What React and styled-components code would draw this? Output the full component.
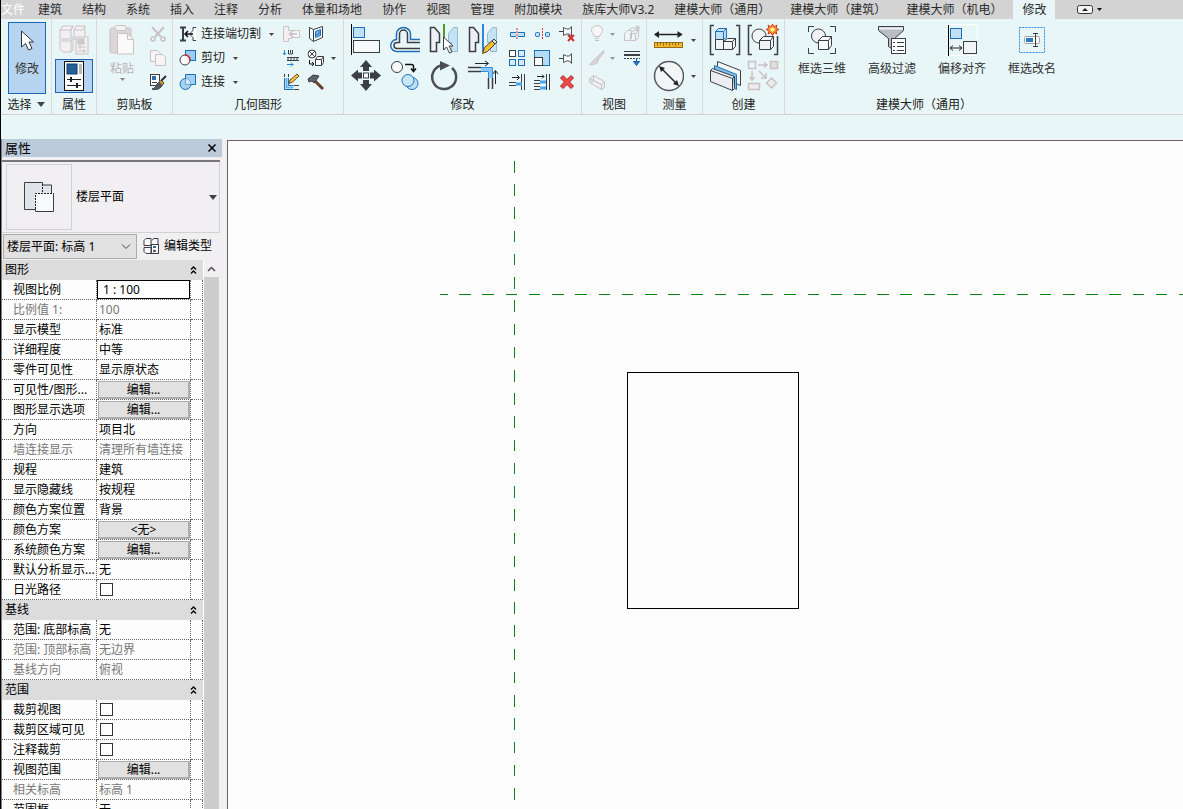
import styled, { createGlobalStyle, css } from "styled-components";

const GlobalStyle = createGlobalStyle`
  * { box-sizing: border-box; }
  body {
    margin: 0;
    overflow: hidden;
    background: #f1eff1;
    font-family: "Noto Sans", "Noto Sans CJK SC", sans-serif;
    font-size: 12px;
    line-height: 18px;
    color: #222;
  }
  button, input, select {
    font: inherit;
    color: inherit;
    margin: 0;
    padding: 0;
    border: 0;
    border-radius: 0;
    background: none;
  }
  svg { display: block; flex: none; }
`;

const Shell = styled.div`
  display: flex;
  flex-direction: column;
  height: 100vh;
  border-left: 1px solid #000;
  overflow: hidden;
`;

/* ---------- ribbon ---------- */

const TabBar = styled.nav`
  display: flex;
  flex: none;
  height: 19px;
  background: #d3d3d3;
  white-space: nowrap;
`;

const Tab = styled.button`
  padding: 0 10px;
  line-height: 18px;
  color: #2b2b2b;
  ${(p) => p.$file && css`
    padding: 0 3px 0 0;
    color: #fff;
  `}
  ${(p) => p.$active && css`
    padding: 0 9px;
    margin-left: 1px;
    background: #e8f6f8;
  `}
`;

const CollapseButton = styled.button`
  display: flex;
  align-items: center;
  gap: 4px;
  margin-left: 22px;
`;

const Ribbon = styled.div`
  display: flex;
  flex: none;
  height: 96px;
  background: #e8f6f8;
  border-bottom: 1px solid #d5cfcd;
`;

const Panel = styled.section`
  display: flex;
  flex-direction: column;
  flex: none;
  width: ${(p) => p.$w}px;
  border-right: ${(p) => (p.$last ? "0" : "1px solid #dcd8d8")};
`;

const PanelBody = styled.div`
  display: flex;
  gap: ${(p) => p.$gap || 0}px;
  height: 76px;
  padding: 3px 0 0 ${(p) => p.$pad || 0}px;
`;

const PanelTitle = styled.div`
  display: flex;
  justify-content: center;
  align-items: center;
  gap: 5px;
  height: 19px;
  line-height: 19px;
  white-space: nowrap;
`;

const BigGrid = styled.div`
  display: grid;
  grid-template-columns: repeat(${(p) => p.$cols}, ${(p) => p.$col || 39}px);
  grid-template-rows: 36px 36px;
  align-items: center;
`;

const SmallGrid = styled.div`
  display: grid;
  grid-template-columns: repeat(${(p) => p.$cols}, ${(p) => p.$col || 25}px);
  grid-template-rows: repeat(3, 24px);
  align-items: center;
`;

const Tool = styled.button`
  display: flex;
  align-items: center;
  gap: ${(p) => p.$gap || 0}px;
  white-space: nowrap;
`;

const ToolLabel = styled.span`
  margin-right: 4px;
`;

const TallTool = styled.button`
  display: flex;
  flex-direction: column;
  flex: none;
  align-items: center;
  width: ${(p) => p.$w}px;
  height: 72px;
  padding-top: 2px;
  white-space: nowrap;
  color: ${(p) => (p.disabled ? "#b9b3b5" : "#333")};
  ${(p) => p.$on && css`
    padding-top: 1px;
    background: #b6d3ef;
    border: 1px solid #1a66b8;
  `}
`;

const TallLabel = styled.span`
  margin-top: 4px;
`;

const PropToggle = styled.button`
  display: flex;
  align-items: center;
  justify-content: center;
  width: 38px;
  height: 34px;
  margin-top: 3px;
  background: #b6d3ef;
  border: 1px solid #1a66b8;
`;

const PropIcons = styled.div`
  display: flex;
  flex-direction: column;
  align-items: center;
  padding-top: 2px;
`;

const OptionsBar = styled.div`
  flex: none;
  height: 24px;
  background: #e8f6f8;
`;

/* ---------- properties palette ---------- */

const Workspace = styled.main`
  display: flex;
  flex: 1;
  min-height: 0;
`;

const Palette = styled.aside`
  display: flex;
  flex-direction: column;
  flex: none;
  width: 221px;
  margin-right: 5px;
  min-height: 0;
  background: #f1eff1;
  border-left: 1px solid #808080;
  color: #000;
`;

const PaletteHead = styled.header`
  display: flex;
  flex: none;
  align-items: center;
  justify-content: space-between;
  height: 18px;
  padding: 0 6px 0 3px;
  background: #bccbda;
  font-size: 13px;
`;

const PaletteBody = styled.div`
  display: flex;
  flex-direction: column;
  flex: 1;
  min-height: 0;
  margin: 3px 2px 0 0;
  border-top: 2px solid #77787a;
`;

const TypeSelector = styled.button`
  display: flex;
  flex: none;
  align-items: center;
  gap: 4px;
  height: 71px;
  padding: 0 2px 0 4px;
  border: 1px solid #cfd3d2;
  border-top: 0;
  border-left: 0;
  text-align: left;
`;

const Preview = styled.span`
  display: flex;
  align-items: center;
  justify-content: center;
  width: 66px;
  height: 66px;
  border: 1px solid #cfd3d2;
`;

const TypeName = styled.span`
  flex: 1;
`;

const FilterRow = styled.div`
  display: flex;
  flex: none;
  align-items: center;
  gap: 6px;
  height: 27px;
`;

const SelectBox = styled.label`
  display: grid;
  grid-template-columns: 1fr 20px;
  align-items: center;
  width: 134px;
  height: 25px;
  margin-left: 1px;
  background: #e1e1e1;
  border: 1px solid #adadad;
`;

const FilterSelect = styled.select`
  grid-row: 1;
  grid-column: 1 / 3;
  height: 23px;
  padding-left: 3px;
  appearance: none;
`;

const Chevron = styled.svg`
  grid-row: 1;
  grid-column: 2;
  justify-self: center;
  pointer-events: none;
`;

const EditType = styled.button`
  display: flex;
  align-items: center;
  gap: 5px;
  padding-bottom: 2px;
`;

const ListArea = styled.div`
  display: flex;
  flex: 1;
  min-height: 0;
  overflow: hidden;
`;

const PropTable = styled.table`
  align-self: flex-start;
  width: 201px;
  table-layout: fixed;
  border-collapse: separate;
  border-spacing: 0;
  background: #fdfdfd;
  white-space: nowrap;
`;

const GroupCell = styled.th`
  height: 20px;
  padding: 0 5px 0 3px;
  background: #dcdcdd;
  font-weight: normal;
  text-align: left;
`;

const GroupInner = styled.div`
  display: flex;
  align-items: center;
  justify-content: space-between;
  height: 20px;
`;

const cell = css`
  height: 20px;
  padding: 0;
  line-height: 18px;
  font-weight: normal;
  text-align: left;
  border-right: 1px dotted #666;
  border-bottom: 1px dotted #666;
  color: ${(p) => (p.$dim ? "#777" : "#000")};
`;

const NameCell = styled.th`
  ${cell}
  padding-left: 11px;
`;

const ValueCell = styled.td`
  ${cell}
  padding-left: ${(p) => (p.$flush ? 0 : 2)}px;
`;

const EndCell = styled.td`
  ${cell}
`;

const ScaleInput = styled.input`
  display: block;
  width: 93px;
  height: 19px;
  padding-left: 5px;
  border: 1px solid #000;
  background: #fff;
`;

const EditButton = styled.button`
  display: block;
  width: 92px;
  height: 18px;
  margin-left: 1px;
  line-height: 16px;
  background: #e1e1e1;
  border: 1px solid #adadad;
  border-right-width: 2px;
  border-bottom-width: 2px;
`;

const Check = styled.input`
  display: block;
  appearance: none;
  width: 13px;
  height: 13px;
  margin-left: 1px;
  border: 1px solid #333;
  background: #fff;
`;

const ScrollBar = styled.div`
  display: flex;
  flex-direction: column;
  width: 16px;
  background: #f1eff1;
  border-left: 1px solid #fff;
`;

const ScrollUp = styled.button`
  display: flex;
  flex: none;
  align-items: center;
  justify-content: center;
  height: 17px;
`;

const ScrollThumb = styled.div`
  flex: 1;
  background: #cdcdcd;
`;

const Canvas = styled.div`
  flex: 1;
  min-width: 0;
  margin-top: 1px;
  border-top: 1px solid #6b6468;
  border-left: 1px solid #6b6468;
  background: #fdfdfd;
`;

/* ---------- icons ---------- */

const INK = "#3b3f45";
const BLUE = "#1c6fbd";
const SKY = "#bfe0f5";
const PALE = "#c9c2c4";

const Svg = ({ w = 32, h = w, children, ...rest }) => (
  <svg width={w} height={h} viewBox={`0 0 ${w} ${h}`} fill="none" stroke={INK} aria-hidden="true" {...rest}>
    {children}
  </svg>
);

const Caret = ({ big, color = "#444" }) =>
  big ? (
    <svg width="8" height="5" viewBox="0 0 8 5" fill={color}><path d="M0 0h8L4 5z" /></svg>
  ) : (
    <svg width="5" height="3" viewBox="0 0 5 3" fill={color}><path d="M0 0h5L2.500 3z" /></svg>
  );

const CursorIcon = () => (
  <Svg w={28} h={32}>
    <path d="M8.500 7v16l4-3.500 3 6.500 3.500-1.500-3-6.500h4.500z" fill="#fff" stroke="#30343a" />
  </Svg>
);

const TypePropsIcon = () => (
  <Svg stroke={PALE}>
    <g fill="#f3f0f1">
      <path d="M2 6l3-4h10l-2 4v9H2zM16 6l2-4h9v10l-3 3h-8zM2 17h11l2-2v11l-2 2H5l-3-3z" />
      <path d="M2 6h11l2-4M13 15l2-2M16 6h9l2-4M13 17v11" fill="none" />
      <rect x="18" y="13" width="12" height="17" />
      <rect x="20" y="15" width="6" height="5" fill="#cfc9cb" />
      <path d="M20 23h8M20 27h8M22 21v4M26 25v4" />
    </g>
  </Svg>
);

const PropsIcon = () => (
  <Svg w={20} h={30}>
    <rect x=".5" y=".5" width="19" height="29" fill="#fff" stroke="#111" />
    <rect x="3" y="3" width="10" height="10" fill="#245f97" stroke="#153f66" />
    <rect x="15" y="3" width="3" height="10" fill="#b9b9b9" stroke="none" />
    <path d="M3 18.500h14M3 24.500h14" stroke="#222" />
    <path d="M7 16v5M13 22v5" stroke="#222" strokeWidth="2" />
  </Svg>
);

const PasteIcon = () => (
  <Svg stroke={PALE}>
    <rect x="4" y="4" width="21" height="25" rx="2" fill="#dbd7d9" />
    <rect x="9" y="1.500" width="11" height="5" rx="2" fill="#f4f2f3" />
    <path d="M11.500 9.500h10l6 6V30h-16z" fill="#fbfafb" />
    <path d="M21.500 9.500v6h6" />
  </Svg>
);

const CutIcon = () => (
  <Svg w={18} stroke={PALE} strokeWidth="2">
    <path d="M3 2l9 10M15 2L6 12" />
    <circle cx="4" cy="14" r="2" strokeWidth="1.500" /><circle cx="14" cy="14" r="2" strokeWidth="1.500" />
  </Svg>
);

const CopyPageIcon = () => (
  <Svg w={18} stroke={PALE}>
    <path d="M1.500 1.500h7l3 3v8h-10z" fill="#f6f4f5" />
    <path d="M6.500 5.500h7l3 3v8h-10z" fill="#f6f4f5" />
  </Svg>
);

const MatchIcon = () => (
  <Svg w={18}>
    <rect x="1.500" y="1.500" width="9" height="11" fill="#fff" />
    <rect x="3" y="3" width="4" height="4" fill="#2a6cae" stroke="none" />
    <path d="M3 9.500h5" />
    <path d="M17 3l-6 6" stroke="#2d3034" strokeWidth="2" />
    <path d="M12 7l3 3-3 4c-3 3-6 3-9 2 3-1 4-2 5-5z" fill="#555b61" />
    <path d="M11 8l3 3" stroke="#d79a3a" strokeWidth="2" />
  </Svg>
);

const CopeIcon = () => (
  <Svg w={18}>
    <path d="M1 2.500h6M1 15.500h6M4 3v12" strokeWidth="2" />
    <path d="M17 2.500h-3v3l-2 2v3l2 2v3h3" fill="#fff" />
    <path d="M6 9h8M9 6L6 9l3 3" stroke="#111" strokeWidth="1.500" />
  </Svg>
);

const GeoCutIcon = () => (
  <Svg w={18}>
    <rect x="6.500" y="1.500" width="10" height="10" fill="#9ecbee" stroke={BLUE} />
    <circle cx="6" cy="11" r="5" fill="#fff" />
    <path d="M6 6a5 5 0 0 1 5 5" stroke="#e02020" strokeWidth="1.500" />
  </Svg>
);

const JoinIcon = () => (
  <Svg w={18} stroke={BLUE}>
    <path d="M6.500 1.500h10v10H12a5.500 5.500 0 1 1-5.500-6z" fill="#a5d1f0" />
    <path d="M6.500 5.500a5 5 0 0 1 5 6h-5z" fill="#d3e9f8" strokeOpacity=".5" />
  </Svg>
);

const WallJoinIcon = () => (
  <Svg w={18} stroke={PALE}>
    <path d="M1.500 1.500h5v4h3v8h-3v3h-5z" fill="#f3f0f1" />
    <path d="M9.500 5.500h8v7h-8" fill="#f8f6f7" />
    <path d="M15 9H8M11 6L7.500 9l3.500 3" strokeWidth="1.500" />
  </Svg>
);

const SplitFaceIcon = () => (
  <Svg w={18}>
    <path d="M2.500 2.500l4 2 9-3v11l-9 4-4-3zM6.500 4.500v12" fill="#f8fbfd" />
    <path d="M8.500 6.500l5-2v6l-5 2z" fill="#7fb9e8" stroke={BLUE} />
    <path d="M12 6v3l-3 1" stroke={BLUE} />
  </Svg>
);

const BeamIcon = () => (
  <Svg w={18}>
    <path d="M2.500 1v4M1 4l1.500 2L4 4" stroke="#1f85e0" />
    <path d="M6.500 1v4h4V1M8.500 1v3" />
    <path d="M5 8.500h12M5 11.500h12" />
    <path d="M5 10h12" strokeDasharray="2 1" />
    <path d="M5 15.500h6M9 13.500l2 2-2 2" stroke="#1f85e0" />
  </Svg>
);

const PaintIcon = () => (
  <Svg w={18}>
    <circle cx="5" cy="5" r="4" fill="#fff" /><path d="M2 2l6 6M8 2L2 8" />
    <path d="M2.500 11v4h4M5 13l2 2-2 2" stroke="#111" />
    <path d="M8.500 10.500l2-3h6v6l-2 3h-6zM8.500 10.500h6v6M14.500 10.500l2-3" fill="#fff" />
  </Svg>
);

const CornerEditIcon = () => (
  <Svg w={18}>
    <path d="M2.500 5v11.500h9M6.500 5v7.500h5" stroke={BLUE} />
    <path d="M4.500 5v9.500h7" stroke="#66b2ea" strokeWidth="2" />
    <path d="M2.500 1v3M6.500 1v3M12 12.500h5M12 16.500h5" />
    <path d="M7 10.500l1-3.500 7-6 2 2-6.500 6z" fill="#f5c242" stroke="#6d4a20" />
  </Svg>
);

const HammerIcon = () => (
  <Svg w={18}>
    <path d="M7 7l9 9" stroke="#6b3d33" strokeWidth="3" />
    <path d="M1 6l5-4 6 1-2 3-3 4-2-2-3 1z" fill="#5c6269" />
  </Svg>
);

const AlignIcon = () => (
  <Svg>
    <path d="M1.500 0v31" stroke="#000" />
    <rect x="3.500" y="3.500" width="11" height="10" fill={SKY} stroke={BLUE} />
    <rect x="3.500" y="16.500" width="26" height="12" fill="#f7fafb" />
  </Svg>
);

const OffsetIcon = () => (
  <Svg>
    <path d="M31 15.500H21.500V10a7 6.500 0 0 0-14 0v5.500A6 6 0 0 0 8 27.500h23" fill="#f3f9fb" stroke={BLUE} strokeWidth="1.500" />
    <path d="M31 18.500H18.500V10a4 4 0 0 0-8 0v8.500H8a3 3 0 0 0 0 6h23" fill="#e8f6f8" strokeWidth="1.500" />
  </Svg>
);

const MirrorHalves = () => (
  <>
    <path d="M2.500 3.500h4l5 6v9h-3v9h-6z" fill="#eef1f3" strokeWidth="1.500" />
    <path d="M29.500 3.500h-4l-5 6v9h3v9h6z" fill="#c5e3f3" stroke="#8dbbd6" />
  </>
);

const MirrorPickIcon = () => (
  <Svg>
    <MirrorHalves />
    <path d="M16 0v26" stroke="#4d9a2e" strokeWidth="2" />
    <path d="M15.500 13v13l3-3 3 6 2.500-1-3-6h4z" fill="#fff" />
  </Svg>
);

const MirrorDrawIcon = () => (
  <Svg>
    <MirrorHalves />
    <path d="M16 0v28" stroke="#3186d6" strokeWidth="2" />
    <path d="M15.500 29.500l2-6 9-8 3 3-9 9z" fill="#f5bd35" stroke="#554128" />
    <path d="M25 17l2-2 3 3-2 2z" fill="#ddd" />
  </Svg>
);

const MoveIcon = () => (
  <Svg stroke="none" fill={INK}>
    <path d="M16 0l6 7h-3v4h-6V7h-3zM16 31l6-7h-3v-4h-6v4h-3zM1 15.500l7-6v3h4v6H8v3zM31 15.500l-7-6v3h-4v6h4v3z" />
    <rect x="13.500" y="13" width="5" height="5" fill="#fff" stroke={INK} />
  </Svg>
);

const CopyIcon = () => (
  <Svg>
    <circle cx="8" cy="7" r="5.500" fill="#f9fbfb" />
    <path d="M16 4.500h6.500a2 2 0 0 1 2 2V11M22 8.500l2.500 3 2.500-3" stroke="#111" strokeWidth="1.500" />
    <circle cx="23" cy="23.500" r="6" fill={SKY} stroke={BLUE} />
    <circle cx="19" cy="20.500" r="6" fill="#c9e6f6" stroke={BLUE} />
  </Svg>
);

const RotateIcon = () => (
  <Svg>
    <path d="M24 8a12 12 0 1 1-11-2.500" stroke="#4b4f54" strokeWidth="2.500" />
    <path d="M12 1l10 4.500-10 5z" fill="#4b4f54" stroke="none" />
  </Svg>
);

const TrimIcon = () => (
  <Svg>
    <path d="M8 3.500h13M18 1l3.500 2.500L18 6M28.500 24V11M26 14l2.500-3.500L31 14" stroke="#222" />
    <path d="M1 7.500h13M1 11.500h13M21.500 18v11M25.500 18v11" strokeWidth="1.500" />
    <path d="M14 9.500h9.500V18" stroke="#8cc6f4" strokeWidth="3" />
    <path d="M14 7.500h11.500V18M14 11.500h7.500V18" stroke="#2f8fe6" />
  </Svg>
);

const SplitIcon = () => (
  <Svg w={18}>
    <path d="M8 7.500H2.500v4H8M10 7.500h6.500v4H10" fill={SKY} stroke={BLUE} />
    <path d="M9 3v12" stroke="#e02828" strokeDasharray="2 1" />
  </Svg>
);

const SplitGapIcon = () => (
  <Svg w={18}>
    <rect x="2.500" y="7.500" width="4" height="4" rx="1" fill={SKY} stroke={BLUE} />
    <rect x="12.500" y="7.500" width="4" height="4" rx="1" fill={SKY} stroke={BLUE} />
    <path d="M9.500 3v12" stroke="#e02828" strokeDasharray="2 1" />
  </Svg>
);

const PinShape = () => (
  <>
    <path d="M1 9.500h4" />
    <path d="M5.500 5.500l3 1.500h3l2-2.500v10L11.500 12h-3l-3 1.500z" fill="#f6fafa" stroke="#555" />
  </>
);

const UnpinIcon = () => (
  <Svg w={18}>
    <g transform="translate(0 -3)"><PinShape /></g>
    <path d="M10 10l6 6M16 10l-6 6" stroke="#d22c2c" strokeWidth="2" />
  </Svg>
);

const PinIcon = () => <Svg w={18}><PinShape /></Svg>;

const ArrayIcon = () => (
  <Svg w={18} fill="#d7ebf7" stroke={BLUE}>
    <rect x="1.500" y="1.500" width="6" height="6" fill="#fff" stroke={INK} />
    <rect x="10.500" y="1.500" width="6" height="6" />
    <rect x="1.500" y="10.500" width="6" height="6" />
    <rect x="10.500" y="10.500" width="6" height="6" />
  </Svg>
);

const ScaleIcon = () => (
  <Svg w={18}>
    <rect x="1.500" y="1.500" width="15" height="15" fill="#b4dcf2" stroke={BLUE} />
    <rect x="1.500" y="8.500" width="8" height="8" fill="#fff" />
  </Svg>
);

const TrimOneIcon = () => (
  <Svg w={18}>
    <path d="M4 4.500h7M9 2l2.500 2.500L9 7" stroke="#222" />
    <path d="M1 9.500h7M1 12.500h7M13.500 1v16M16.500 1v16" />
    <path d="M8 11h6" stroke="#4aa3ee" strokeWidth="3" />
  </Svg>
);

const TrimManyIcon = () => (
  <Svg w={18}>
    <path d="M4 3.500h7M9 1.500l2 2-2 2" stroke="#222" />
    <path d="M1 7.500h6M1 10.500h6M1 13.500h6M1 16.500h6M13.500 1v16M16.500 1v16" />
    <path d="M7 9h6M7 15h6" stroke="#4aa3ee" strokeWidth="3" />
  </Svg>
);

const DeleteIcon = () => (
  <Svg w={18}>
    <path d="M2.500 5l2.500-2.500L9 6.500l4-4L15.500 5l-4 4 4 4-2.500 2.500-4-4-4 4L2.500 13l4-4z" fill="#f24a4a" stroke="#a61f1f" />
  </Svg>
);

const BulbIcon = () => (
  <Svg w={18} stroke={PALE}>
    <path d="M6.500 11.500c0-2-3-3-3-6a5.500 5 0 0 1 11 0c0 3-3 4-3 6z" fill="#f8f5f6" />
    <path d="M7 13.500h4M7 15.500h4" />
  </Svg>
);

const DisplaceIcon = () => (
  <Svg w={18} stroke={PALE}>
    <path d="M1.500 8.500l3-3h4v8l-2 2h-5zM7.500 8.500l3-3h5v7l-3 3h-5zM7.500 8.500h5v7M12.500 8.500l3-3M6 5l2-2h4" />
    <path d="M14.500 0v6M12 3h5M12.500 1l4 4M16.500 1l-4 4" />
  </Svg>
);

const BrushIcon = () => (
  <Svg w={18} stroke={PALE} fill="#d9d3d5">
    <path d="M15.500 1.500l1 1-6 8-2-2z" />
    <path d="M7.500 9.500l3 2c-1 3-5 5-9 4 3-1 3-4 6-6z" />
  </Svg>
);

const LineworkIcon = () => (
  <Svg w={18}>
    <path d="M1 2.500h16" /><path d="M1 6h16" strokeWidth="2" />
    <path d="M1 9.500h16" strokeDasharray="2 1" />
    <path d="M13.500 9v4M10.500 12.500h6l-3 4z" fill="#1f7ad8" stroke="#175ca8" />
  </Svg>
);

const BoxIcon = () => (
  <Svg w={18} stroke={PALE} fill="#f1eeef">
    <path d="M1.500 5.500l4-3 11 6v6l-3 2-12-7zM1.500 5.500l12 6v5M13.500 11.500l3-3M4 7v3M5.500 2.500v5l8 4" />
  </Svg>
);

const RulerIcon = () => (
  <Svg>
    <path d="M3 10.500h27" stroke="#222" strokeWidth="1.500" />
    <path d="M2 10.500l5-3.500v7zM30.500 10.500l-5-3.500v7z" fill="#222" stroke="none" />
    <rect x="2.500" y="18.500" width="28" height="5" fill="#f2b927" stroke="#9a6a1c" />
    <path d="M5.500 19v3M8.500 19v2M11.500 19v3M14.500 19v2M17.500 19v3M20.500 19v2M23.500 19v3M26.500 19v2" stroke="#9a6a1c" />
  </Svg>
);

const DimensionIcon = () => (
  <Svg>
    <circle cx="17" cy="16" r="14.500" fill="#f3f5f6" stroke="#55595e" strokeWidth="1.500" />
    <path d="M9 8l16 16" stroke="#222" strokeWidth="1.500" />
    <path d="M7 6l6 2-4 4zM27 26l-6-2 4-4z" fill="#222" stroke="none" />
  </Svg>
);

const GroupIcon = () => (
  <Svg>
    <path d="M5 1.500H1.500v29H5M27 1.500h3.500v29H27" strokeWidth="1.500" />
    <path d="M6.500 7.500l3-3h8v9l-3 2h-8z" fill={SKY} stroke={BLUE} />
    <path d="M6.500 7.500h8v8M14.500 7.500l3-3" stroke={BLUE} />
    <path d="M6.500 15.500h8v10h-8zM14.500 17.500l4-3h8v8l-3 3h-9z" fill="#f3f4f6" />
    <path d="M14.500 17.500h9v8M23.500 17.500l3-3" />
  </Svg>
);

const NewGroupIcon = () => (
  <Svg>
    <path d="M5 1.500H1.500v29H5M27 30.500h3.500V12" strokeWidth="1.500" />
    <circle cx="12" cy="12" r="7" fill="#f3f4f6" />
    <path d="M12.500 16.500l4-4h10v10l-3 3h-11z" fill="#f3f4f6" />
    <path d="M12.500 16.500h11v9M23.500 16.500l3-4" />
    <path d="M25.500 0l1.500 3 3-2-1 3 3 1.500-3 1.500 1 3-3-1.500-1.500 3-1.500-3-3 1.500 1-3-3-1.500 3-1.500-1-3 3 2z" fill="#ff9c28" stroke="#d3391c" />
    <circle cx="25.500" cy="5.500" r="2" fill="#fff3a0" stroke="none" />
  </Svg>
);

const WallLayersIcon = () => (
  <Svg>
    <path d="M8.500 1.500l23 9v15l-23-10z" fill="#f6f7f8" />
    <path d="M5.500 5.500l22 9v15l-22-10z" fill="#7dbff0" stroke={BLUE} />
    <path d="M1.500 10.500l22 8v12l-22-9zM1.500 10.500l2-2 22 8-2 2M25.500 16.500v12l-2 2" fill="#eceef1" />
  </Svg>
);

const PartsIcon = () => (
  <Svg stroke={PALE} strokeWidth="1.500">
    <rect x="1.500" y="1.500" width="7" height="7" /><rect x="23.500" y="1.500" width="7" height="7" fill="#e3dfe1" />
    <path d="M11 5h9M17 2.500l3 2.500-3 2.500M5 11v9M2.500 17L5 20l2.500-3M12 11l7 7M19 13v5h-5" />
    <rect x="1.500" y="23.500" width="11" height="6" fill="#eeebec" />
    <path d="M24.500 18l5 5-5 5-5-5z" fill="#eeebec" />
  </Svg>
);

const Box3dIcon = () => (
  <Svg>
    <path d="M2.500 8V2.500H8M24 2.500h5.500V8M2.500 24v5.500H8M24 29.500h5.500V24" />
    <circle cx="12.500" cy="12" r="7" fill="#eef0f2" />
    <path d="M12.500 16.500l4-4h9v9l-3 4h-10z" fill="#f8f9fa" />
    <path d="M12.500 16.500h10v9M22.500 16.500l3-4" />
  </Svg>
);

const FilterIcon = () => (
  <Svg>
    <path d="M2.500 2.500h25v4l-9 8v12l-6-4v-8l-10-8z" fill="#b9bec4" />
    <path d="M3 3.500h24v2H3z" fill="#eef0f2" stroke="none" />
    <rect x="15.500" y="14.500" width="14" height="15" fill="#fff" />
    <path d="M17 18.500h2M21 18.500h7M17 22.500h2M21 22.500h7M17 26.500h2M21 26.500h7" />
  </Svg>
);

const OffsetAlignIcon = () => (
  <Svg>
    <path d="M0 .5h31v31H0" stroke="#fff" />
    <path d="M2.500 1v31" stroke="#000" />
    <rect x="4.500" y="4.500" width="11" height="10" fill={SKY} stroke={BLUE} />
    <rect x="17.500" y="17.500" width="13" height="12" fill="#f2f3f5" />
    <path d="M4 24h12M7 21.500L4 24l3 2.500M13 21.500l3 2.500-3 2.500" stroke="#222" />
  </Svg>
);

const RenameIcon = () => (
  <Svg>
    <rect x="3.500" y="3.500" width="25" height="25" stroke="#2b8ae0" strokeDasharray="2 1" />
    <rect x="8.500" y="12.500" width="15" height="7" rx="1" fill="#fff" stroke="#9aa4ad" />
    <rect x="10" y="14" width="7" height="4" fill="#2f79c4" stroke="none" />
    <path d="M17 9.500h5M17 22.500h5M19.500 10v12" />
  </Svg>
);

const FloorPlanIcon = () => (
  <Svg w={32} h={34}>
    <path d="M1.500 2.500h17v2h10v9h-16v16h-11z" fill="#dfe4e8" stroke="none" />
    <path d="M12.500 13.500h18v18h-18z" fill="#f8fbfc" stroke="none" />
    <path d="M12.500 29.500h-11v-27h18v2.500h9v8" />
    <path d="M19.500 4v9.500M12.500 29V13.500h17" stroke="#222" strokeDasharray="2 1" />
    <path d="M30.500 13v18.500h-18v-2" />
  </Svg>
);

const EditTypeIcon = () => (
  <Svg w={16}>
    <path d="M1 2.500l2-2h5v7H1zM9 2.500l1.500-2H15V7H9M1 9.500h7v6H3l-2-2z" fill="#f7f8f9" />
    <rect x="8.500" y="6.500" width="7" height="9" fill="#fff" />
    <rect x="10" y="8" width="3" height="2" fill="#2a6cae" stroke="none" />
    <path d="M10 12l3 1-3 1" />
  </Svg>
);

const CollapseIcon = () => (
  <svg width="16" height="9" viewBox="0 0 16 9" fill="none" stroke="#333" aria-hidden="true">
    <rect x=".5" y=".5" width="15" height="8" rx="2" fill="#f4f4f4" />
    <path d="M5 6h6L8 3z" fill="#222" stroke="none" />
  </svg>
);

const CloseIcon = () => (
  <svg width="8" height="8" viewBox="0 0 8 8" stroke="#000" strokeWidth="1.500" aria-hidden="true">
    <path d="M.5.500l7 7M7.500.500l-7 7" />
  </svg>
);

const DoubleUp = () => (
  <svg width="9" height="9" viewBox="0 0 9 9" fill="none" stroke="#000" strokeWidth="1.300" aria-hidden="true">
    <path d="M2 3.500L4.500 1 7 3.500M2 7.500L4.500 5 7 7.500" />
  </svg>
);

/* ---------- data ---------- */

const TABS = [
  "建筑", "结构", "系统", "插入", "注释", "分析", "体量和场地", "协作", "视图", "管理",
  "附加模块", "族库大师V3.2", "建模大师（通用）", "建模大师（建筑）", "建模大师（机电）",
];

const MODIFY_BIG = [
  ["对齐", AlignIcon], ["偏移", OffsetIcon], ["镜像 - 拾取轴", MirrorPickIcon], ["镜像 - 绘制轴", MirrorDrawIcon],
  ["移动", MoveIcon], ["复制", CopyIcon], ["旋转", RotateIcon], ["修剪/延伸为角", TrimIcon],
];

const MODIFY_SMALL = [
  ["拆分图元", SplitIcon], ["用间隙拆分", SplitGapIcon], ["解锁", UnpinIcon],
  ["阵列", ArrayIcon], ["缩放", ScaleIcon], ["锁定", PinIcon],
  ["修剪/延伸单个图元", TrimOneIcon], ["修剪/延伸多个图元", TrimManyIcon], ["删除", DeleteIcon],
];

const MASTER_TOOLS = [
  ["框选三维", Box3dIcon], ["高级过滤", FilterIcon], ["偏移对齐", OffsetAlignIcon], ["框选改名", RenameIcon],
];

const GROUPS = [
  {
    title: "图形",
    rows: [
      { name: "视图比例", kind: "input", value: "1 : 100" },
      { name: "比例值 1:", value: "100", dim: true },
      { name: "显示模型", value: "标准" },
      { name: "详细程度", value: "中等" },
      { name: "零件可见性", value: "显示原状态" },
      { name: "可见性/图形...", kind: "button", value: "编辑..." },
      { name: "图形显示选项", kind: "button", value: "编辑..." },
      { name: "方向", value: "项目北" },
      { name: "墙连接显示", value: "清理所有墙连接", dim: true },
      { name: "规程", value: "建筑" },
      { name: "显示隐藏线", value: "按规程" },
      { name: "颜色方案位置", value: "背景" },
      { name: "颜色方案", kind: "button", value: "<无>" },
      { name: "系统颜色方案", kind: "button", value: "编辑..." },
      { name: "默认分析显示...", value: "无" },
      { name: "日光路径", kind: "check" },
    ],
  },
  {
    title: "基线",
    rows: [
      { name: "范围: 底部标高", value: "无" },
      { name: "范围: 顶部标高", value: "无边界", dim: true },
      { name: "基线方向", value: "俯视", dim: true },
    ],
  },
  {
    title: "范围",
    rows: [
      { name: "裁剪视图", kind: "check" },
      { name: "裁剪区域可见", kind: "check" },
      { name: "注释裁剪", kind: "check" },
      { name: "视图范围", kind: "button", value: "编辑..." },
      { name: "相关标高", value: "标高 1", dim: true },
      { name: "范围框", value: "无" },
    ],
  },
];

/* ---------- parts ---------- */

function IconTool({ name, icon: Icon }) {
  return <Tool aria-label={name}><Icon /></Tool>;
}

function PropValue({ row }) {
  if (row.kind === "input") return <ScaleInput aria-label={row.name} defaultValue={row.value} />;
  if (row.kind === "button") return <EditButton>{row.value}</EditButton>;
  if (row.kind === "check") return <Check type="checkbox" aria-label={row.name} />;
  return row.value;
}

function PropGroup({ group }) {
  return (
    <tbody>
      <tr>
        <GroupCell colSpan={3}>
          <GroupInner>{group.title}<DoubleUp /></GroupInner>
        </GroupCell>
      </tr>
      {group.rows.map((row) => (
        <tr key={row.name}>
          <NameCell scope="row" $dim={row.dim}>{row.name}</NameCell>
          <ValueCell $dim={row.dim} $flush={row.kind === "input" || row.kind === "button"}>
            <PropValue row={row} />
          </ValueCell>
          <EndCell />
        </tr>
      ))}
    </tbody>
  );
}

function RibbonPanels() {
  return (
    <Ribbon>
      <Panel $w={51}>
        <PanelBody $pad={7}>
          <TallTool $w={38} $on><CursorIcon /><TallLabel>修改</TallLabel></TallTool>
        </PanelBody>
        <PanelTitle>选择<Caret big /></PanelTitle>
      </Panel>
      <Panel $w={45}>
        <PanelBody $pad={3}>
          <PropIcons>
            <Tool aria-label="类型属性" disabled><TypePropsIcon /></Tool>
            <PropToggle aria-label="属性"><PropsIcon /></PropToggle>
          </PropIcons>
        </PanelBody>
        <PanelTitle>属性</PanelTitle>
      </Panel>
      <Panel $w={76}>
        <PanelBody $pad={5} $gap={7}>
          <TallTool $w={40} disabled><PasteIcon /><TallLabel>粘贴</TallLabel><Caret color="#8d7f7f" /></TallTool>
          <SmallGrid $cols={1}>
            <IconTool name="剪切" icon={CutIcon} />
            <IconTool name="复制到剪贴板" icon={CopyPageIcon} />
            <IconTool name="匹配类型属性" icon={MatchIcon} />
          </SmallGrid>
        </PanelBody>
        <PanelTitle>剪贴板</PanelTitle>
      </Panel>
      <Panel $w={171}>
        <PanelBody $pad={6}>
          <SmallGrid $cols={1} $col={103}>
            <Tool $gap={4}><CopeIcon /><ToolLabel>连接端切割</ToolLabel><Caret /></Tool>
            <Tool $gap={4}><GeoCutIcon /><ToolLabel>剪切</ToolLabel><Caret /></Tool>
            <Tool $gap={4}><JoinIcon /><ToolLabel>连接</ToolLabel><Caret /></Tool>
          </SmallGrid>
          <SmallGrid $cols={2}>
            <IconTool name="墙连接" icon={WallJoinIcon} />
            <IconTool name="拆分面" icon={SplitFaceIcon} />
            <IconTool name="梁/柱连接" icon={BeamIcon} />
            <Tool aria-label="填色" $gap={6}><PaintIcon /><Caret /></Tool>
            <IconTool name="编辑连接" icon={CornerEditIcon} />
            <IconTool name="拆除" icon={HammerIcon} />
          </SmallGrid>
        </PanelBody>
        <PanelTitle>几何图形</PanelTitle>
      </Panel>
      <Panel $w={238}>
        <PanelBody $pad={6} $gap={2}>
          <BigGrid $cols={4}>
            {MODIFY_BIG.map(([name, icon]) => <IconTool key={name} name={name} icon={icon} />)}
          </BigGrid>
          <SmallGrid $cols={3}>
            {MODIFY_SMALL.map(([name, icon]) => <IconTool key={name} name={name} icon={icon} />)}
          </SmallGrid>
        </PanelBody>
        <PanelTitle>修改</PanelTitle>
      </Panel>
      <Panel $w={65}>
        <PanelBody $pad={6}>
          <SmallGrid $cols={2} $col={35}>
            <Tool aria-label="隐藏" $gap={4} disabled><BulbIcon /><Caret color="#9a9496" /></Tool>
            <IconTool name="置换图元" icon={DisplaceIcon} />
            <Tool aria-label="替换视图中的图形" $gap={4} disabled><BrushIcon /><Caret color="#9a9496" /></Tool>
            <IconTool name="线处理" icon={LineworkIcon} />
            <IconTool name="选择框" icon={BoxIcon} />
          </SmallGrid>
        </PanelBody>
        <PanelTitle>视图</PanelTitle>
      </Panel>
      <Panel $w={56}>
        <PanelBody $pad={5}>
          <BigGrid $cols={1} $col={48}>
            <Tool aria-label="测量" $gap={7}><RulerIcon /><Caret /></Tool>
            <Tool aria-label="尺寸标注" $gap={7}><DimensionIcon /><Caret /></Tool>
          </BigGrid>
        </PanelBody>
        <PanelTitle>测量</PanelTitle>
      </Panel>
      <Panel $w={82}>
        <PanelBody $pad={6}>
          <BigGrid $cols={2} $col={38}>
            <IconTool name="创建组" icon={GroupIcon} />
            <IconTool name="创建类似实例" icon={NewGroupIcon} />
            <IconTool name="创建部件" icon={WallLayersIcon} />
            <IconTool name="创建零件" icon={PartsIcon} />
          </BigGrid>
        </PanelBody>
        <PanelTitle>创建</PanelTitle>
      </Panel>
      <Panel $w={278} $last>
        <PanelBody $pad={2}>
          {MASTER_TOOLS.map(([name, Icon]) => (
            <TallTool key={name} $w={70}><Icon /><TallLabel>{name}</TallLabel></TallTool>
          ))}
        </PanelBody>
        <PanelTitle>建模大师（通用）</PanelTitle>
      </Panel>
    </Ribbon>
  );
}

function PropertiesPalette() {
  return (
    <Palette>
      <PaletteHead>
        属性
        <Tool aria-label="关闭"><CloseIcon /></Tool>
      </PaletteHead>
      <PaletteBody>
        <TypeSelector>
          <Preview><FloorPlanIcon /></Preview>
          <TypeName>楼层平面</TypeName>
          <Caret big />
        </TypeSelector>
        <FilterRow>
          <SelectBox>
            <FilterSelect aria-label="属性过滤器" defaultValue="plan">
              <option value="plan">楼层平面: 标高 1</option>
            </FilterSelect>
            <Chevron width="10" height="6" viewBox="0 0 10 6" fill="none" stroke="#444">
              <path d="M1 .5l4 4 4-4" />
            </Chevron>
          </SelectBox>
          <EditType><EditTypeIcon />编辑类型</EditType>
        </FilterRow>
        <ListArea>
          <PropTable>
            <colgroup>
              <col width="95" />
              <col width="94" />
              <col width="12" />
            </colgroup>
            {GROUPS.map((group) => <PropGroup key={group.title} group={group} />)}
          </PropTable>
          <ScrollBar>
            <ScrollUp aria-label="向上滚动">
              <svg width="9" height="6" viewBox="0 0 9 6" fill="none" stroke="#505050" strokeWidth="1.500">
                <path d="M1 5l3.500-3.500L8 5" />
              </svg>
            </ScrollUp>
            <ScrollThumb />
          </ScrollBar>
        </ListArea>
      </PaletteBody>
    </Palette>
  );
}

function PlanView() {
  return (
    <Canvas>
      <svg width="100%" height="100%" fill="none" shapeRendering="crispEdges">
        <line x1="286.5" y1="20" x2="286.5" y2="659" stroke="#0a8410" strokeDasharray="11.600 11.620" />
        <line x1="212" y1="153.5" x2="100%" y2="153.5" stroke="#0a8410" strokeDasharray="11.600 11.620" strokeDashoffset="4" />
        <rect x="399.5" y="231.5" width="171" height="236" stroke="#000" />
      </svg>
    </Canvas>
  );
}

export default function App() {
  return (
    <Shell>
      <GlobalStyle />
      <TabBar>
        <Tab $file>文件</Tab>
        {TABS.map((name) => <Tab key={name}>{name}</Tab>)}
        <Tab $active>修改</Tab>
        <CollapseButton aria-label="最小化功能区"><CollapseIcon /><Caret color="#111" /></CollapseButton>
      </TabBar>
      <RibbonPanels />
      <OptionsBar />
      <Workspace>
        <PropertiesPalette />
        <PlanView />
      </Workspace>
    </Shell>
  );
}
